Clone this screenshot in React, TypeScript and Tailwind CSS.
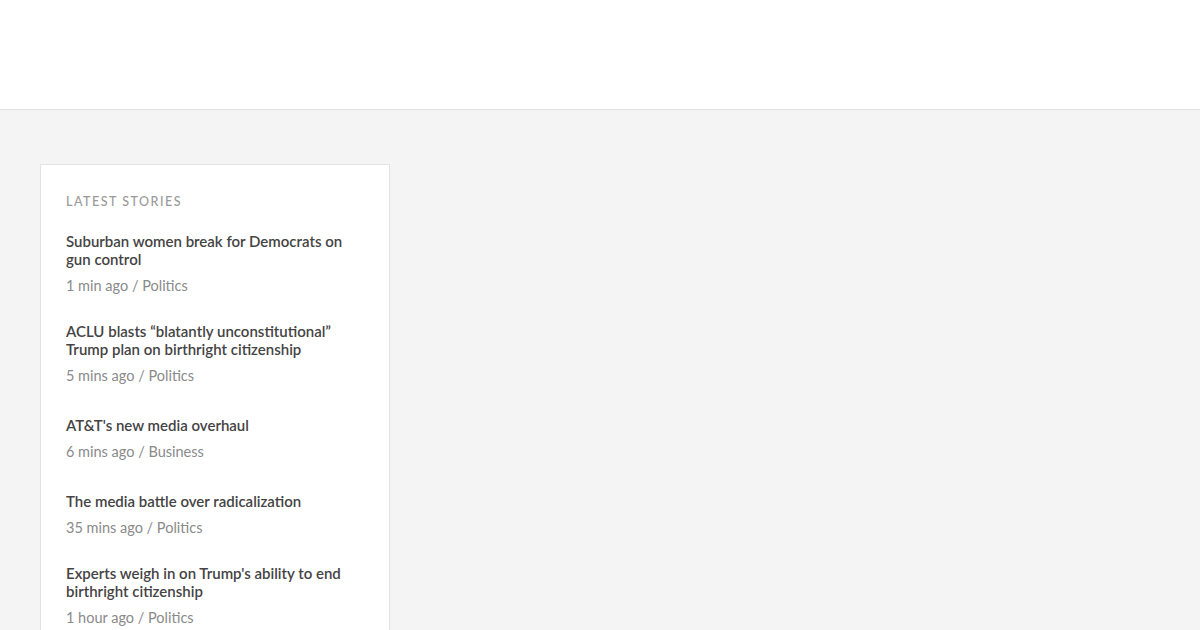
import React from "react";

const stories = [
  { title: "Suburban women break for Democrats on gun control", meta: "1 min ago / Politics", mt: "mt-0" },
  { title: "ACLU blasts “blatantly unconstitutional” Trump plan on birthright citizenship", meta: "5 mins ago / Politics", mt: "mt-[27px]" },
  { title: "AT&T's new media overhaul", meta: "6 mins ago / Business", mt: "mt-[31px]" },
  { title: "The media battle over radicalization", meta: "35 mins ago / Politics", mt: "mt-[31px]" },
  { title: "Experts weigh in on Trump's ability to end birthright citizenship", meta: "1 hour ago / Politics", mt: "mt-[27px]" },
];

export default function App() {
  return (
    <div className="w-[1200px] h-[630px] overflow-hidden bg-[#f4f4f4]" style={{ fontFamily: "Lato, 'Noto Sans', sans-serif" }}>
      <header className="h-[110px] bg-white border-b border-[#e2e2e2]" />
      <main className="pt-[54px] pl-[40px]">
        <section className="w-[350px] bg-white border border-[#e3e3e3] px-[25px] pt-[29px] pb-[40px]">
          <h2 className="text-[12.5px] leading-[16px] tracking-[0.12em] uppercase text-[#9a9a9a] font-medium">Latest Stories</h2>
          <ul className="mt-[22px]">
            {stories.map((s) => (
              <li key={s.title} className={s.mt}>
                <a className="block text-[15px] leading-[18px] font-semibold text-[#444444]">{s.title}</a>
                <div className="mt-[9px] text-[14.5px] leading-[18px] text-[#8a8a8a]">{s.meta}</div>
              </li>
            ))}
          </ul>
        </section>
      </main>
    </div>
  );
}
